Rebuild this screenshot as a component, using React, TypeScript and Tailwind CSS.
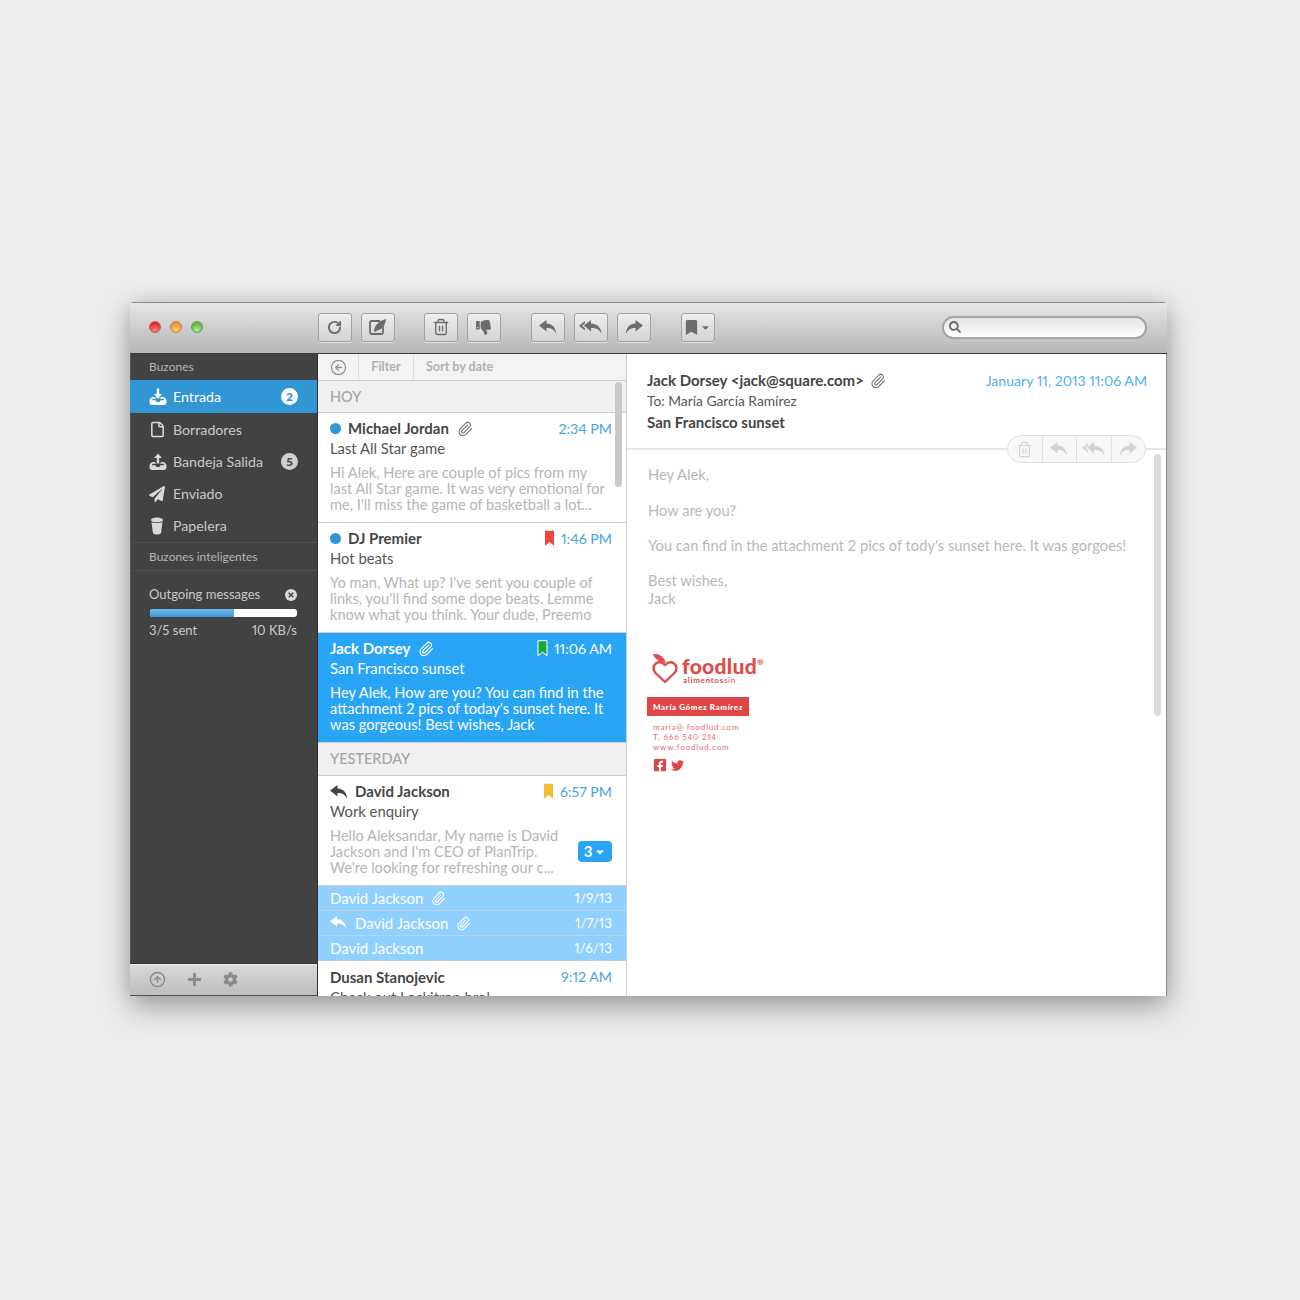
import React from "react";
import { FaThumbsDown, FaBookmark, FaPaperPlane, FaSearch, FaPlus, FaCog, FaFacebookSquare, FaTwitter, FaTimes, FaCaretDown } from "react-icons/fa";
import { Paperclip, RotateCw, Trash2, File, CircleArrowUp, CircleArrowLeft } from "lucide-react";

const font = "font-['Lato','Liberation_Sans',sans-serif]";

function Reply({ w = 18, flip = false, className = "" }: { w?: number; flip?: boolean; className?: string }) {
  return (
    <svg width={w} height={(w * 14) / 18} viewBox="0 0 18 14" fill="currentColor" className={className} style={flip ? { transform: "scaleX(-1)" } : undefined}>
      <path d="M7.500 0 0 5.600 7.500 11.500V8c4 0 7 1 9.500 5.500C17 8 13.500 3.600 7.500 3.400z" />
    </svg>
  );
}

function ReplyAll({ w = 23, className = "" }: { w?: number; className?: string }) {
  return (
    <svg width={w} height={(w * 14) / 23} viewBox="0 0 23 14" fill="currentColor" className={className}>
      <path d="M6 1 0 5.800 6 10.500V8.300L3.200 5.800 6 3.300z" />
      <path d="M12 0 4.800 5.600 12 11.500V8c4.500 0 8 1 10.500 5.500C22.500 8 18 3.600 12 3.400z" />
    </svg>
  );
}

function ToolBtn({ children, className = "" }: { children: React.ReactNode; className?: string }) {
  return (
    <div className={`flex h-[29px] w-[34px] items-center justify-center rounded-[3px] border border-[#a2a2a2] bg-gradient-to-b from-[#efefef] to-[#d2d2d2] text-[#6d6d6d] shadow-[0_1px_0_rgba(255,255,255,0.5)] ${className}`}>
      {children}
    </div>
  );
}

function Compose() {
  return (
    <svg width="20" height="18" viewBox="0 0 20 18" fill="none">
      <path d="M12 3H3.500A1.500 1.500 0 0 0 2 4.500v10A1.500 1.500 0 0 0 3.500 16h10a1.500 1.500 0 0 0 1.500-1.500V8" stroke="#6d6d6d" strokeWidth="1.800" />
      <path d="M6 13C6.500 8 10 3 18 1c-.5 6-4 11-9 11.500L7 14z" fill="#6d6d6d" />
    </svg>
  );
}

function Tray({ up = false }: { up?: boolean }) {
  return (
    <svg width="18" height="18" viewBox="0 0 18 18" fill="currentColor">
      <path d="M.5 13c0-2.500 2-4 4-4H6l1 1.700H4.500c-1 0-1.500.6-1.700 1.500h3.700l1 1.800h3l1-1.800h3.700c-.2-.9-.7-1.500-1.700-1.500H11L12 9h1.500c2 0 4 1.500 4 4v1.500c0 1.500-1 2.500-2.500 2.500H3C1.500 17 .5 16 .5 14.500z" />
      {up ? <path d="M9 .5 5 5h2.800v5.500h2.400V5H13z" /> : <path d="M7.800 .5h2.400V6H13l-4 5-4-5h2.800z" />}
    </svg>
  );
}

function Cup() {
  return (
    <svg width="16" height="18" viewBox="0 0 16 18" fill="currentColor">
      <path d="M2 3c0-1.500 3-2.500 6-2.500S14 1.500 14 3s-2.500 2.300-6 2.300S2 4.500 2 3z" />
      <path d="M2.500 5C4 6.300 12 6.300 13.500 5l-1.300 10.500c-.2 1.500-2 2-4.200 2s-4-.5-4.200-2z" />
    </svg>
  );
}

function NavItem({ icon, label, badge, active = false }: { icon: React.ReactNode; label: string; badge?: string; active?: boolean }) {
  return (
    <div className={`flex shrink-0 items-center pl-[19px] pr-[19px] text-[14.2px] ${active ? "h-[33px] bg-[#3096d4] text-white" : "h-[32px] pt-px text-[#c9c9c9]"}`}>
      <span className={`flex w-[24px] shrink-0 items-center ${active ? "text-white" : "text-[#d8d8d8]"}`}>{icon}</span>
      <span className="flex-1">{label}</span>
      {badge && (
        <span className={`flex h-[17px] w-[17px] items-center justify-center rounded-full text-[12px] font-black ${active ? "bg-white text-[#3096d4]" : "bg-[#cfcfcf] text-[#444444]"}`}>{badge}</span>
      )}
    </div>
  );
}

function Dot() {
  return <span className="mr-[7px] h-[11px] w-[11px] shrink-0 rounded-full bg-[#2f97d8]" />;
}

function Flag({ color, outline = false }: { color: string; outline?: boolean }) {
  return (
    <svg width="11" height="17" viewBox="0 0 11 17" className="mr-[6px]">
      <path d="M1 .7h9v15l-4.500-3.600L1 15.700z" fill={color} stroke={outline ? "#ffffff" : "none"} strokeWidth="1" />
    </svg>
  );
}

function Msg({
  lead, name, clip, flag, time, subject, lines, selected = false, badge = false,
}: {
  lead?: React.ReactNode; name: string; clip?: boolean; flag?: React.ReactNode; time: string; subject: string; lines: string[]; selected?: boolean; badge?: boolean;
}) {
  return (
    <div className={`relative h-[110px] shrink-0 border-b border-[#cfcfcf] pl-3 pr-[14px] pt-[6px] ${selected ? "bg-[#29a5f5] text-white" : "bg-white"}`}>
      <div className="flex h-[19px] items-center">
        {lead}
        <span className={`text-[15px] font-bold ${selected ? "text-white" : "text-[#454545]"}`}>{name}</span>
        {clip && <Paperclip size={16} strokeWidth={1.700} className={`ml-[8px] ${selected ? "text-white" : "text-[#777777]"}`} />}
        <span className="flex-1" />
        {flag}
        <span className={`text-[14.2px] ${selected ? "text-white" : "text-[#4aa3df]"}`}>{time}</span>
      </div>
      <div className={`h-5 text-[14.8px] leading-5 ${selected ? "text-white" : "text-[#555555]"}`}>{subject}</div>
      <div className={`mt-[7px] text-[14.6px] leading-4 ${selected ? "text-white" : "text-[#b5b5b5]"}`}>
        {lines.map((l) => (
          <div key={l} className="whitespace-nowrap">{l}</div>
        ))}
      </div>
      {badge && (
        <div className="absolute right-[14px] top-[65px] flex h-[21px] w-[34px] items-center justify-center gap-[2px] rounded-[4px] bg-[#29a5f5] text-[15px] font-bold text-white">
          3<FaCaretDown size={12} />
        </div>
      )}
    </div>
  );
}

function Compact({ name, date, clip = false, reply = false }: { name: string; date: string; clip?: boolean; reply?: boolean }) {
  return (
    <div className="flex h-[25px] shrink-0 items-center border-b border-[#bcd3e2] bg-[#8fd0ff] pl-3 pr-[14px] text-[15px] text-white">
      {reply && <Reply w={17} className="mr-[8px]" />}
      <span>{name}</span>
      {clip && <Paperclip size={15} strokeWidth={1.700} className="ml-[8px]" />}
      <span className="flex-1" />
      <span className="text-[13.5px]">{date}</span>
    </div>
  );
}

function DayHead({ label, h }: { label: string; h: string }) {
  return (
    <div className={`flex shrink-0 items-center border-b border-[#cfcfcf] bg-[#f0f0f0] pl-3 text-[14.5px] font-medium text-[#a5a5a5] ${h}`}>
      {label}
    </div>
  );
}

function PillCell({ children, last = false }: { children: React.ReactNode; last?: boolean }) {
  return (
    <div className={`flex h-full flex-1 items-center justify-center text-[#d4d4d4] ${last ? "" : "border-r border-[#e0e0e0]"}`}>{children}</div>
  );
}

function Heart() {
  return (
    <svg width="27" height="31" viewBox="0 0 27 31" fill="none" stroke="#df4b4b" strokeWidth="2.400" strokeLinejoin="round" strokeLinecap="round">
      <path d="M13 29 3.500 20C.5 16.500 1 12.500 4 10.500c3-2 6-1.500 9 1.500 3-3 6-3.500 9-1.500 3 2 3.500 6 .5 9.500z" />
      <path d="M13 9C12 4 7 1 1.500 1.500 3 6 8 9 13 9z" fill="#df4b4b" strokeWidth="1" />
    </svg>
  );
}

export default function App() {
  return (
    <div className={`h-[1300px] w-[1300px] overflow-hidden bg-[#ededed] pl-[130px] pt-[302px] [font-variant-numeric:proportional-nums] ${font}`}>
      <div className="flex h-[694px] w-[1037px] flex-col overflow-hidden rounded-t-[4px] shadow-[0_12px_30px_rgba(0,0,0,0.3),0_0_20px_rgba(0,0,0,0.12)]">
        {/* toolbar */}
        <div className="flex h-[52px] shrink-0 items-center border-b border-t border-b-[#3a3a3a] border-t-[#8a8a8a] bg-gradient-to-b from-[#e6e6e6] to-[#b6b6b6] pb-[2px]">
          <div className="flex w-[188px] shrink-0 items-center gap-[9px] pl-[19px]">
            <span className="h-3 w-3 rounded-full border border-[#b9605e] bg-[radial-gradient(circle_at_50%_80%,#ff8a80,#e02a28_70%)]" />
            <span className="h-3 w-3 rounded-full border border-[#b98a50] bg-[radial-gradient(circle_at_50%_80%,#ffd080,#e8932e_70%)]" />
            <span className="h-3 w-3 rounded-full border border-[#6d9c5c] bg-[radial-gradient(circle_at_50%_80%,#b5ec95,#62b548_70%)]" />
          </div>
          <ToolBtn className="mr-[9px]"><RotateCw size={15} strokeWidth={3} /></ToolBtn>
          <ToolBtn className="mr-[29px]"><Compose /></ToolBtn>
          <ToolBtn className="mr-[9px]"><Trash2 size={18} strokeWidth={1.800} /></ToolBtn>
          <ToolBtn className="mr-[30px]"><FaThumbsDown size={15} /></ToolBtn>
          <ToolBtn className="mr-[9px]"><Reply w={18} /></ToolBtn>
          <ToolBtn className="mr-[9px]"><ReplyAll w={23} /></ToolBtn>
          <ToolBtn className="mr-[30px]"><Reply w={18} flip /></ToolBtn>
          <ToolBtn className="gap-[1px]"><FaBookmark size={15} /><FaCaretDown size={11} /></ToolBtn>
          <div className="ml-[227px] flex h-[23px] w-[206px] items-center rounded-full border-2 border-[#a4a4a4] bg-gradient-to-b from-[#e4e4e4] to-white pl-[5px] text-[#6d6d6d]">
            <FaSearch size={12} />
          </div>
          <span className="w-[20px]" />
        </div>

        <div className="flex min-h-0 flex-1">
          {/* sidebar */}
          <div className="flex w-[188px] shrink-0 flex-col border-l border-r border-l-[#555555] border-r-[#2e2e2e] bg-[#424242]">
            <div className="-ml-px flex h-[26px] shrink-0 items-center pl-[19px] text-[12px] text-[#b4b4b4]">Buzones</div>
            <div className="-ml-px flex flex-col">
              <NavItem active icon={<Tray />} label="Entrada" badge="2" />
              <NavItem icon={<File size={17} strokeWidth={2.200} />} label="Borradores" />
              <NavItem icon={<Tray up />} label="Bandeja Salida" badge="5" />
              <NavItem icon={<FaPaperPlane size={16} />} label="Enviado" />
              <NavItem icon={<Cup />} label="Papelera" />
            </div>
            <div className="-ml-px mt-[1px] flex h-[29px] shrink-0 items-center border-y border-dotted border-[#5c5c5c] pl-[19px] text-[12px] text-[#b4b4b4]">Buzones inteligentes</div>
            <div className="-ml-px px-[20px] pt-[15px]">
              <div className="flex h-[18px] items-center text-[13px] text-[#c9c9c9]">
                <span className="-ml-px flex-1">Outgoing messages</span>
                <span className="flex h-3 w-3 items-center justify-center rounded-full bg-[#d8d8d8] text-[#444444]"><FaTimes size={8} /></span>
              </div>
              <div className="mt-[5px] flex h-[8px] overflow-hidden rounded-[3px] bg-white">
                <div className="h-full w-[84px] bg-gradient-to-b from-[#6cb8ee] to-[#3d97da]" />
              </div>
              <div className="mt-[5px] flex h-[18px] items-center justify-between text-[13px] text-[#c9c9c9]">
                <span className="-ml-px">3/5 sent</span>
                <span>10 KB/s</span>
              </div>
            </div>
            <div className="flex-1" />
            <div className="-ml-px flex h-[32px] shrink-0 items-center gap-[21px] border-b border-t border-b-[#555555] border-t-[#f0f0f0] bg-gradient-to-b from-[#d8d8d8] to-[#bdbdbd] pb-px pl-[19px] text-[#8a8a8a] shadow-[0_-1px_0_#2e2e2e]">
              <CircleArrowUp size={17} strokeWidth={2} />
              <FaPlus size={15} />
              <FaCog size={15} />
            </div>
          </div>

          {/* list */}
          <div className="relative flex w-[309px] shrink-0 flex-col overflow-hidden border-r border-[#cfcfcf] bg-white">
            <div className="flex h-[27px] shrink-0 items-center border-b border-[#d0d0d0] bg-[#f3f3f3] text-[12.5px] font-bold text-[#b0b0b0]">
              <div className="flex h-full w-[41px] items-center justify-center border-r border-[#dddddd]"><CircleArrowLeft size={17} strokeWidth={1.800} className="text-[#8f8f8f]" /></div>
              <div className="flex h-full w-[55px] items-center justify-center border-r border-[#dddddd]">Filter</div>
              <div className="pl-[12px]">Sort by date</div>
            </div>
            <DayHead label="HOY" h="h-[32px]" />
            <Msg lead={<Dot />} name="Michael Jordan" clip time="2:34 PM" subject="Last All Star game"
              lines={["Hi Alek, Here are couple of pics from my", "last All Star game. It was very emotional for", "me, I'll miss the game of basketball a lot..."]} />
            <Msg lead={<Dot />} name="DJ Premier" flag={<Flag color="#f0453f" />} time="1:46 PM" subject="Hot beats"
              lines={["Yo man, What up? I've sent you couple of", "links, you'll find some dope beats. Lemme", "know what you think. Your dude, Preemo"]} />
            <Msg selected name="Jack Dorsey" clip flag={<Flag color="#17a83c" outline />} time="11:06 AM" subject="San Francisco sunset"
              lines={["Hey Alek, How are you? You can find in the", "attachment 2 pics of today's sunset here. It", "was gorgeous! Best wishes, Jack"]} />
            <DayHead label="YESTERDAY" h="h-[33px]" />
            <Msg lead={<Reply w={18} className="mr-[7px] text-[#454545]" />} name="David Jackson" flag={<Flag color="#f4bb34" />} time="6:57 PM" subject="Work enquiry" badge
              lines={["Hello Aleksandar, My name is David", "Jackson and I'm CEO of PlanTrip.", "We're looking for refreshing our c..."]} />
            <Compact name="David Jackson" date="1/9/13" clip />
            <Compact name="David Jackson" date="1/7/13" clip reply />
            <Compact name="David Jackson" date="1/6/13" />
            <div className="h-[60px] shrink-0 bg-white pl-3 pr-[14px] pt-[6px]">
              <div className="flex h-5 items-center">
                <span className="text-[15px] font-bold text-[#454545]">Dusan Stanojevic</span>
                <span className="flex-1" />
                <span className="text-[14.2px] text-[#4aa3df]">9:12 AM</span>
              </div>
              <div className="h-5 text-[14.8px] leading-5 text-[#555555]">Check out Lockitron bro!</div>
            </div>
            <div className="absolute left-[297px] top-[28px] h-[105px] w-[7px] rounded-full bg-[#c9c9c9]" />
          </div>

          {/* detail */}
          <div className="relative min-w-0 flex-1 border-r border-[#8a8a8a] bg-white">
            <div className="h-[96px] border-b-2 border-[#e6e6e6] pl-5 pr-[19px] pt-[16px]">
              <div className="flex h-[21px] items-center">
                <span className="text-[15px] font-bold text-[#454545]">Jack Dorsey &lt;jack@square.com&gt;</span>
                <Paperclip size={16} strokeWidth={1.700} className="ml-[6px] text-[#777777]" />
                <span className="flex-1" />
                <span className="text-[14.1px] text-[#4fb0f2]">January 11, 2013 11:06 AM</span>
              </div>
              <div className="flex h-[21px] items-center text-[13.8px] text-[#555555]">To: María García Ramírez</div>
              <div className="flex h-[21px] items-center text-[15px] font-bold text-[#454545]">San Francisco sunset</div>
            </div>
            <div className="absolute left-[380px] top-[81px] flex h-[28px] w-[139px] items-center rounded-full border border-[#e0e0e0] bg-[#f7f7f7]">
              <PillCell><Trash2 size={17} strokeWidth={1.600} /></PillCell>
              <PillCell><Reply w={18} /></PillCell>
              <PillCell><ReplyAll w={23} /></PillCell>
              <PillCell last><Reply w={18} flip /></PillCell>
            </div>
            <div className="pl-[21px] pt-[15px] text-[14.7px] text-[#b8b8b8]">
              <div className="h-[18px] leading-[18px]">Hey Alek,</div>
              <div className="mt-[18px] h-[18px] leading-[18px]">How are you?</div>
              <div className="mt-[17px] h-[18px] leading-[18px]">You can find in the attachment 2 pics of tody's sunset here. It was gorgoes!</div>
              <div className="mt-[17px] h-[18px] leading-[18px]">Best wishes,</div>
              <div className="h-[18px] leading-[18px]">Jack</div>
              {/* signature */}
              <div className="mt-[46px] flex items-start pl-[4px]">
                <Heart />
                <div className="ml-[3px] pt-[3px]">
                  <div className="flex h-[20px] items-start text-[21px] font-black leading-[20px] tracking-[0.3px] text-[#df4b4b]">foodlud<span className="text-[8px] font-bold leading-[12px]">®</span></div>
                  <div className="h-[8px] pl-px text-[8px] font-bold leading-[8px] tracking-[0.7px] text-[#df4b4b]">alimentos<span className="font-normal">sin</span></div>
                </div>
              </div>
              <div className="mt-[13px] flex h-[19px] w-[102px] -translate-x-px items-center justify-center bg-[#df4545] text-[8px] font-black tracking-[0.6px] text-white">María Gómez Ramírez</div>
              <div className="mt-[6px] pl-[5px] text-[8px] leading-[10px] tracking-[0.8px] text-[#e56a6a]">
                <div>maria@ foodlud.com</div>
                <div>T. 666 540 214</div>
                <div>www.foodlud.com</div>
              </div>
              <div className="mt-[6px] flex items-center gap-[4px] pl-[5px] text-[#df4545]">
                <FaFacebookSquare size={14} />
                <FaTwitter size={13} />
              </div>
            </div>
            <div className="absolute left-[527px] top-[100px] h-[262px] w-[7px] rounded-full bg-[#dcdcdc]" />
          </div>
        </div>
      </div>
    </div>
  );
}
